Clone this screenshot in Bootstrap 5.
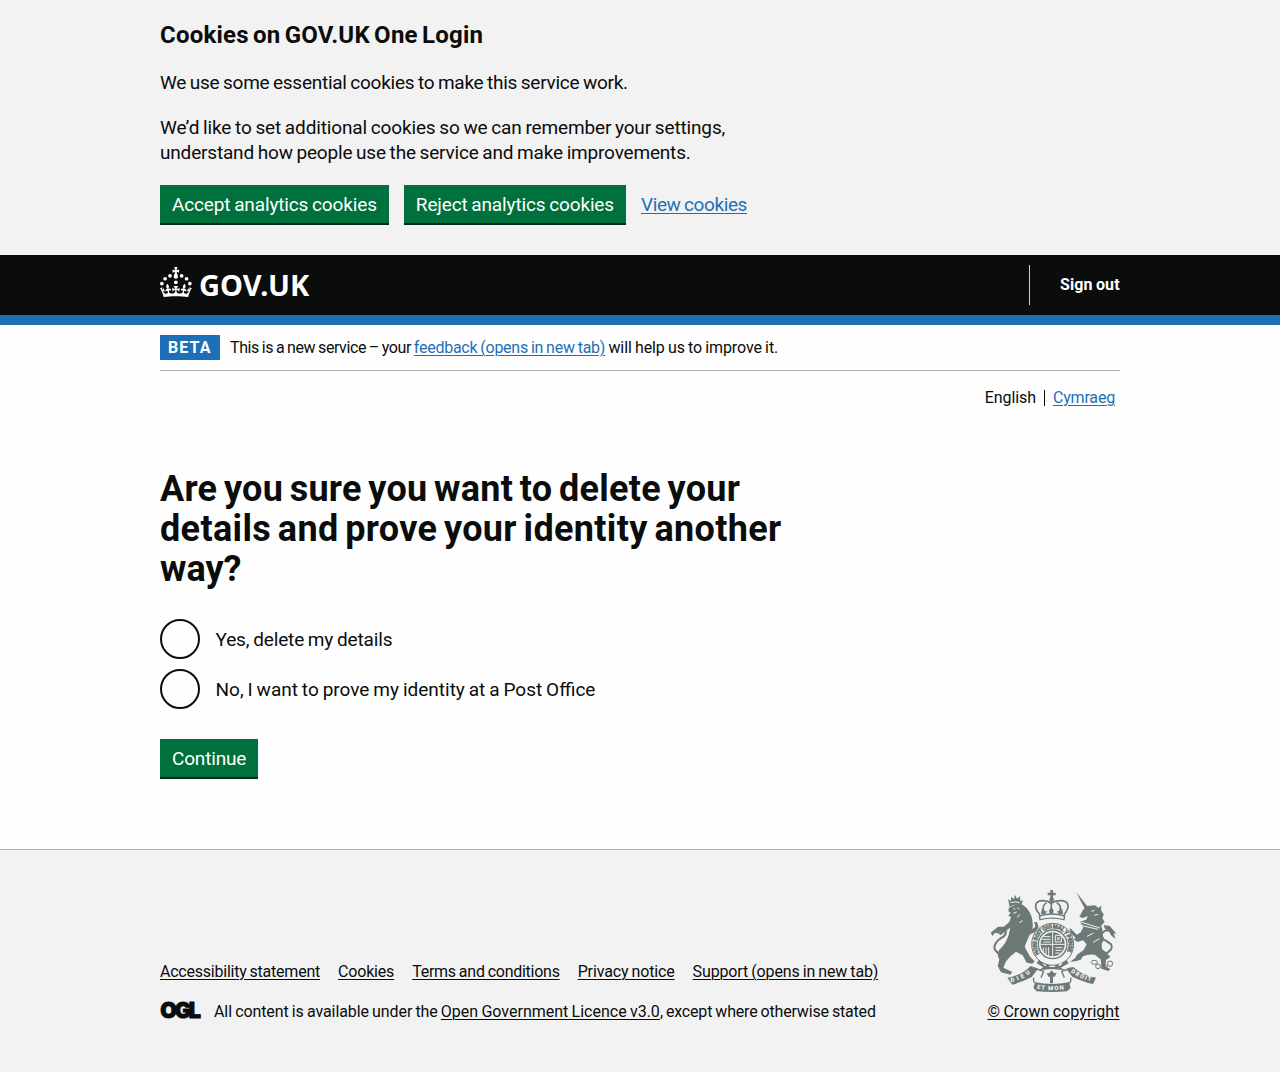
<!DOCTYPE html>
<html lang="en">
<head>
<meta charset="utf-8">
<meta name="viewport" content="width=device-width, initial-scale=1">
<title>Are you sure you want to delete your details? – GOV.UK One Login</title>
<link href="https://cdn.jsdelivr.net/npm/bootstrap@5.3.0/dist/css/bootstrap.min.css" rel="stylesheet">
<style>
  :root { --ink: #0b0c0c; --blue: #1d70b8; --green: #00703c; --rule: #b1b4b6; }
  body { font-family: Roboto, "Noto Sans", sans-serif; font-size: 16px; line-height: 20px; color: var(--ink); background: #fefefe; word-spacing: -.7px; }
  a { color: var(--blue); text-decoration: underline; text-decoration-thickness: 1px; text-underline-offset: 1.6px; }
  .wrap { width: 960px; margin: 0 auto; }
  .copy19 { font-size: 19px; line-height: 25px; word-spacing: -.8px; }
  .cookie-bar, .page-foot { background: #f2f2f2; }
  .cookie-bar { height: 255px; padding-top: 20px; }
  .cookie-bar h2 { font-size: 24px; line-height: 30px; font-weight: 700; margin-bottom: 20px; word-spacing: -2px; letter-spacing: .23px; }
  .cookie-bar p { margin-bottom: 20px; }
  .btn-gov { background: var(--green); color: #fff; border: 0; border-radius: 0; box-shadow: 0 2px 0 #002d18; height: 38px; padding: 7px 12px; font-size: 19px; line-height: 25px; word-spacing: -.8px; white-space: nowrap; }
  .btn-gov:hover { background: #005a30; color: #fff; }
  .continue { margin-top: 20px; }
  .actions { gap: 15px; }
  .view-link { padding-top: 7px; }
  .top-bar { background: var(--ink); border-bottom: 10px solid var(--blue); height: 70px; }
  .top-bar .wrap { height: 60px; }
  .crown { margin-bottom: 6px; }
  .brand { font-family: "Noto Sans", sans-serif; font-size: 29px; line-height: 34px; font-weight: 700; margin-left: 7px; letter-spacing: .1px; color: #fff; }
  .sign { border-left: 1px solid #d0d2d3; height: 40px; width: 91px; padding-left: 30px; line-height: 40px; font-weight: 700; letter-spacing: .1px; white-space: nowrap; }
  .sign a { color: #fff; text-decoration: none; }
  .phase { padding: 10px 0; border-bottom: 1px solid var(--rule); height: 46px; }
  .phase-tag { background: var(--blue); color: #fff; font-weight: 700; letter-spacing: 1.1px; width: 60px; height: 25px; line-height: 26px; padding-left: 8px; margin-right: 10px; }
  .phase-text { line-height: 26px; }
  .langs { padding: 17px 5px 0 0; }
  .langs .cur { border-right: 1px solid var(--ink); padding-right: 8px; margin-right: 8px; height: 16px; line-height: 16px; margin-top: 2px; }
  .question { font-size: 36px; line-height: 40px; font-weight: 700; word-spacing: -2.6px; margin: 61px 0 30px; width: 640px; }
  .opt { min-height: 40px; margin-bottom: 10px; padding: 0; gap: 15.5px; }
  .opt .form-check-input { width: 40px; height: 40px; border: 2px solid var(--ink); margin: 0; float: none; background-color: transparent; flex: none; }
  .page-main { height: 524px; }
  .page-foot { border-top: 1px solid var(--rule); height: 223px; padding-top: 38px; }
  .page-foot a { color: var(--ink); }
  .foot-links { gap: 18px; margin-bottom: 20px; white-space: nowrap; }
  .licence { gap: 13px; white-space: nowrap; }
  .ogl { margin: -2px 0; overflow: visible; }
  .crest { width: 133px; }
  .arms { margin: 0 1px 10px 0; }
  .t-43 { letter-spacing: -.41px; } .t-39 { letter-spacing: -.39px; } .t-27 { letter-spacing: -.26px; }
  .t-23 { letter-spacing: -.23px; } .t-18 { letter-spacing: -.18px; } .t-14 { letter-spacing: -.14px; }
  .t-09 { letter-spacing: -.09px; } .t05 { letter-spacing: .06px; } .q1 { letter-spacing: .27px; } .q2 { letter-spacing: .34px; }
</style>
</head>
<body>
<section class="cookie-bar" aria-label="Cookies on GOV.UK One Login">
  <div class="wrap">
    <h2>Cookies on GOV.UK One Login</h2>
    <p class="copy19 t-27">We use some essential cookies to make this service work.</p>
    <p class="copy19"><span class="t-14">We’d like to set additional cookies so we can remember your settings,</span><br><span class="t-18">understand how people use the service and make improvements.</span></p>
    <div class="d-flex actions align-items-start">
      <button type="button" class="btn btn-gov t-14">Accept analytics cookies</button>
      <button type="button" class="btn btn-gov t-14">Reject analytics cookies</button>
      <a href="#" class="copy19 t-39 view-link">View cookies</a>
    </div>
  </div>
</section>

<header class="top-bar">
  <div class="wrap d-flex justify-content-between align-items-center">
    <a href="#" class="d-flex align-items-center text-decoration-none" aria-label="GOV.UK">
      <svg class="crown" width="32" height="30" viewBox="0 0 64 60" fill="#fff" aria-hidden="true">
        <circle cx="20" cy="17.6" r="3.7"/><circle cx="10.2" cy="23.5" r="3.7"/><circle cx="3.7" cy="33.2" r="3.7"/><circle cx="31.7" cy="30.6" r="3.7"/><circle cx="43.3" cy="17.6" r="3.7"/><circle cx="53.2" cy="23.5" r="3.7"/><circle cx="59.7" cy="33.2" r="3.7"/>
        <path d="M33.1,9.8c.2-.1.3-.3.5-.5l4.6,2.4v-6.8l-4.6,1.5c-.1-.2-.3-.3-.5-.5l1.9-5.9h-6.7l1.9,5.9c-.2.1-.3.3-.5.5l-4.6-1.5v6.8l4.6-2.4c.1.2.3.3.5.5l-2.6,8c-.9,2.8,1.2,5.7,4.1,5.7h0c3,0,5.1-2.9,4.1-5.7l-2.6-8ZM37,37.9s-3.4,3.8-4.1,6.1c2.2,0,4.2-.5,6.4-2.8l-.7,8.5c-2-2.8-4.4-4.1-5.7-3.8.1,3.1.5,6.7,5.8,7.2,3.7.3,6.7-1.5,7-3.8.4-2.6-2-4.3-3.7-1.6-1.4-4.5,2.4-6.1,4.9-3.2-1.9-4.5-1.8-7.7,2.4-10.9,3,4,2.6,7.3-1.2,11.1,2.4-1.3,6.2,0,4,4.6-1.2-2.8-3.7-2.2-4.2.2-.3,1.7.7,3.7,3,4.2,1.9.3,4.7-.9,7-5.9-1.3,0-2.4.7-3.9,1.7l2.4-8c.6,2.3,1.4,3.7,2.2,4.5.6-1.6.5-2.8,0-5.3l5,1.8c-2.6,3.6-5.2,8.7-7.3,17.5-7.4-1.1-15.7-1.7-24.5-1.7h0c-8.8,0-17.1.6-24.5,1.7-2.1-8.9-4.7-13.9-7.3-17.5l5-1.8c-.5,2.5-.6,3.7,0,5.3.8-.8,1.6-2.3,2.2-4.5l2.4,8c-1.5-1-2.6-1.7-3.9-1.7,2.3,5,5.2,6.2,7,5.9,2.3-.4,3.3-2.4,3-4.2-.5-2.4-3-3.1-4.2-.2-2.2-4.6,1.6-6,4-4.6-3.7-3.7-4.2-7.1-1.2-11.1,4.2,3.2,4.3,6.4,2.4,10.9,2.5-2.8,6.3-1.3,4.9,3.2-1.8-2.7-4.1-1-3.7,1.6.3,2.3,3.3,4.1,7,3.8,5.4-.5,5.7-4.2,5.8-7.2-1.3-.2-3.7,1-5.7,3.8l-.7-8.5c2.2,2.3,4.2,2.7,6.4,2.8-.7-2.3-4.1-6.1-4.1-6.1h10.6Z"/>
      </svg>
      <span class="brand">GOV.UK</span>
    </a>
    <div class="sign"><a href="#">Sign out</a></div>
  </div>
</header>

<main class="page-main">
  <div class="wrap">
    <div class="phase d-flex">
      <strong class="phase-tag">BETA</strong>
      <div class="phase-text"><span class="t-43">This is a new service – your </span><a href="#" class="t-27">feedback (opens in new tab)</a> <span class="t-09">will help us to improve it.</span></div>
    </div>
    <nav class="langs d-flex justify-content-end" aria-label="Language">
      <span class="cur t-09">English</span><a href="#" class="t-18">Cymraeg</a>
    </nav>
    <form>
      <h1 class="question"><span class="q1">Are you sure you want to delete your</span><br><span class="q2">details and prove your identity another</span><br>way?</h1>
      <div class="form-check opt d-flex align-items-center">
        <input class="form-check-input" type="radio" name="choice" id="yes">
        <label class="form-check-label copy19 t-14" for="yes">Yes, delete my details</label>
      </div>
      <div class="form-check opt d-flex align-items-center">
        <input class="form-check-input" type="radio" name="choice" id="no">
        <label class="form-check-label copy19" for="no">No, I want to prove my identity at a Post Office</label>
      </div>
      <button type="button" class="btn btn-gov t-18 continue">Continue</button>
    </form>
  </div>
</main>

<footer class="page-foot">
  <div class="wrap d-flex justify-content-between align-items-end">
    <div>
      <div class="d-flex foot-links">
        <a href="#" class="t-23">Accessibility statement</a>
        <a href="#" class="t-18">Cookies</a>
        <a href="#" class="t-27">Terms and conditions</a>
        <a href="#" class="t-14">Privacy notice</a>
        <a href="#" class="t-14">Support (opens in new tab)</a>
      </div>
      <div class="d-flex licence align-items-center">
        <svg class="ogl" width="41" height="24" viewBox="0 0 41 24" aria-hidden="true"><text x=".2" y="18.4" font-family="Inter, sans-serif" font-weight="900" font-size="21.5" letter-spacing="-2.2" stroke="#0b0c0c" stroke-width=".9" fill="#0b0c0c">OGL</text></svg>
        <div><span class="t-09">All content is available under the </span><a href="#">Open Government Licence v3.0</a><span class="t-18">, except where otherwise stated</span></div>
      </div>
    </div>
    <div class="crest d-flex flex-column align-items-center">
      <svg class="arms" width="126" height="104" viewBox="30 24 378 312" fill="#6c7977" aria-hidden="true">
        <defs>
          <path id="ring" d="M179 221A48 48 0 1 1 257 221"/>
          <path id="rib1" d="M93 307Q130 300 160 272"/>
          <path id="rib2" d="M170 326Q216 336 264 326"/>
          <path id="rib3" d="M272 276Q300 300 345 305"/>
        </defs>
        <!-- royal crown -->
        <path d="M211 30h8v8h8v8h-8v8h-8v-8h-8v-8h8z"/><circle cx="215" cy="59" r="7"/>
        <g fill="none" stroke="#6c7977" stroke-width="5">
          <path d="M180 104C158 80 166 62 188 62Q204 62 213 70Q224 62 242 62C266 62 272 80 252 104"/>
          <path d="M214 68V92M192 96Q184 78 200 68M238 96Q248 78 230 68"/>
          <path d="M178 108Q215 96 254 108L252 119Q216 110 180 119Z" stroke-width="4"/>
        </g>
        <path d="M186 84l6 10h10l-7 8h-12zM214 82l7 9-2 10h-10l-2-10zM246 84l-6 10h-10l7 8h12z"/>
        <!-- garter and shield -->
        <circle cx="218" cy="193" r="63" fill="none" stroke="#6c7977" stroke-width="3"/>
        <circle cx="218" cy="193" r="43" fill="none" stroke="#6c7977" stroke-width="4"/>
        <text font-family="Roboto, sans-serif" font-weight="900" font-size="17" stroke="#6c7977" stroke-width="1.6"><textPath href="#ring" textLength="202">HONI SOIT QUI MAL Y PENSE</textPath></text>
        <circle cx="218" cy="193" r="36"/>
        <g stroke="#f2f2f2" stroke-width="3" fill="none">
          <path d="M218 157V229M182 193H254M190 170h22M187 178h25M190 186h22M190 202v16M198 202v22M206 202v26M226 166h18v20h-18zM231 171l8 10M239 171l-8 10M226 203h22M226 211h20M226 219h14"/>
        </g>
        <path d="M176 240q40 32 84 0l6 10-24 13 14 8-40-4-40 4 14-9-20-12z"/>
        <path d="M190 252l8 6M208 259h18M236 257l10-7" stroke="#f2f2f2" stroke-width="4"/>
        <!-- crowned lion -->
        <path d="M84 57l8 6 2-13 8 7 3-13 6 12 9-7 1 14 8-2-6 17q-18-8-34 2z"/>
        <path d="M91 68q14-5 28 0" stroke="#f2f2f2" stroke-width="3" fill="none"/>
        <path d="M87 83Q104 70 128 74Q142 82 150 98Q162 122 157 148L166 140L163 126L171 126L176 142L165 157L150 163Q140 184 134 200Q142 216 151 231L164 244L157 251L140 248L128 226L108 215Q92 226 78 244L70 263L97 276L91 284L63 277L53 258L58 239L53 226L57 210Q78 192 86 165L91 143L80 150L63 165L54 161L64 153L57 147L70 142L88 126L93 111L85 107L92 98L85 94Z"/>
        <path d="M100 84l6 5M112 82l5 6M100 100l10-4M111 112l9-8M118 128l10-6" stroke="#f2f2f2" stroke-width="3"/>
        <path d="M60 222Q36 210 46 192Q52 180 70 170Q82 160 74 150Q64 142 52 153" fill="none" stroke="#6c7977" stroke-width="6"/>
        <path d="M32 158L54 140L78 140L83 152L68 149L56 160L45 158L37 168Z"/>
        <!-- chained unicorn -->
        <path d="M289 37L323 80L313 84Z"/>
        <path d="M298 110L309 90L320 78L345 76L356 84L364 76L363 91L371 103L367 115L374 126L363 137Q371 150 366 163L373 178L365 191L366 207L380 218L391 231L378 240L376 258L391 268L384 273L365 266L362 238L344 224Q326 221 309 229L302 239L286 244L270 245L285 235L291 224L310 211L320 193L309 181L292 186L281 178L287 174L272 160L268 143L279 152L290 164L301 158L310 142L300 125L318 119L324 109L308 114Z"/>
        <path d="M302 126l58 18M306 137l48 11M334 94l10-3M343 106l12-3M321 169l19-10M339 187l20-11" stroke="#f2f2f2" stroke-width="3"/>
        <path d="M378 221Q403 206 393 193Q383 184 370 178Q358 163 374 153Q388 146 396 162" fill="none" stroke="#6c7977" stroke-width="6"/>
        <path d="M371 135L389 138L409 161L401 160L406 177L393 166L387 151L375 147Z"/>
        <g fill="none" stroke="#6c7977" stroke-width="3"><ellipse cx="343" cy="247" rx="9" ry="6"/><circle cx="354" cy="259" r="7"/><ellipse cx="372" cy="260" rx="10" ry="6"/><circle cx="390" cy="251" r="8"/></g>
        <!-- motto ribbons -->
        <path d="M82 293Q125 286 152 258L174 266L155 291Q126 306 97 314Z"/>
        <path d="M348 293Q305 286 280 261L259 267L277 290Q310 306 339 312Z"/>
        <path d="M166 307Q216 317 267 307L272 324L261 334Q216 338 170 334L160 323Z"/>
        <path d="M161 293Q157 310 173 311M272 293Q276 309 261 311M161 264l30 10-8 19M274 264l-29 10 8 19" fill="none" stroke="#6c7977" stroke-width="4"/>
        <path d="M215 271l7 8 8 1-6 10h-5v20h-9v-20h-5l-5-10 8-1z"/>
        <g font-family="Roboto, sans-serif" font-weight="900" fill="#f2f2f2" font-size="18">
          <text><textPath href="#rib1" textLength="65">DIEU</textPath></text>
          <text><textPath href="#rib2" textLength="82">ET MON</textPath></text>
          <text><textPath href="#rib3" textLength="68">DROIT</textPath></text>
        </g>
      </svg>
      <a href="#" class="text-nowrap t05">© Crown copyright</a>
    </div>
  </div>
</footer>
<script src="https://cdn.jsdelivr.net/npm/bootstrap@5.3.0/dist/js/bootstrap.bundle.min.js"></script>
</body>
</html>
